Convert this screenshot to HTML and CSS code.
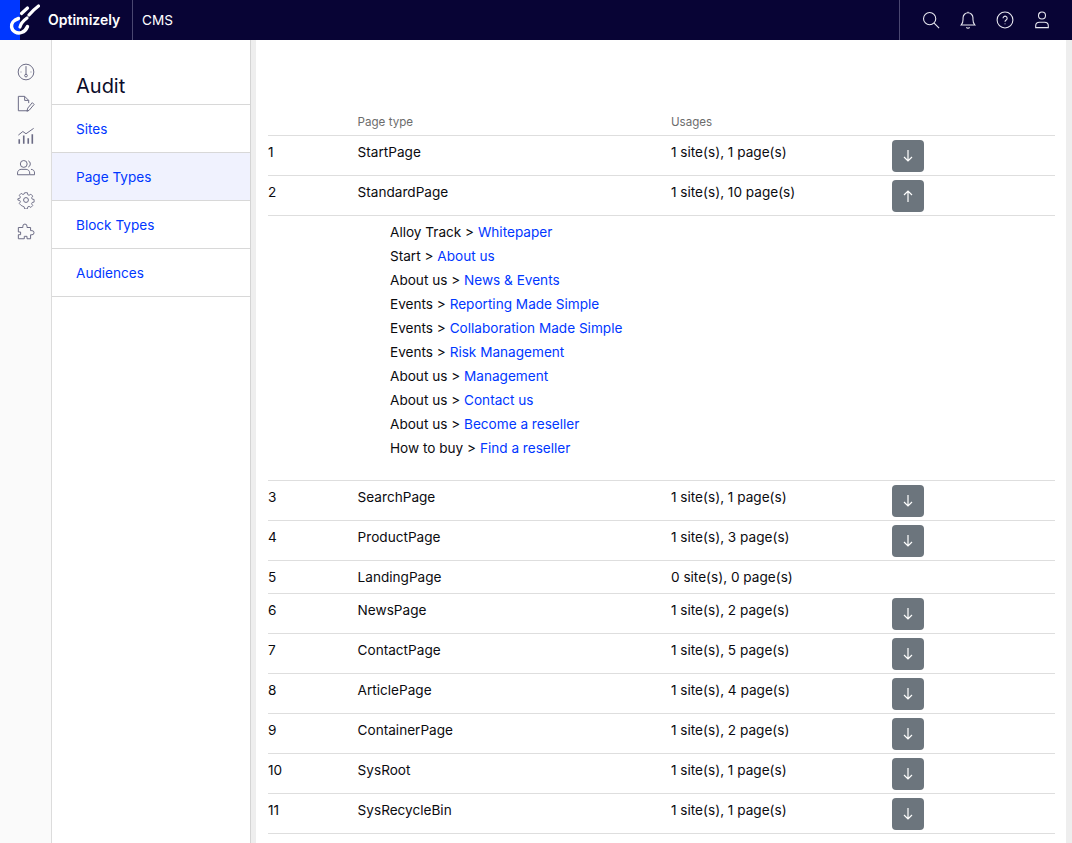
FILE: index.html
```html
<!DOCTYPE html>
<html lang="en">
<head>
<meta charset="utf-8">
<title>Audit</title>
<link rel="stylesheet" href="styles.css">
</head>
<body>
<header class="topbar">
  <a class="logo" href="#">
    <svg class="logo-mark" viewBox="0 0 40 40" width="40" height="40" aria-hidden="true">
      <g fill="none" stroke="#fff" stroke-linecap="round">
        <path d="M18.500 18.500C13.500 20 11 23.500 11.600 27C12.300 31.500 17 34 21.500 32.500C24.500 31.500 26.500 29 27.500 26.500" stroke-width="3.400"/>
        <path d="M20 27C20.800 23.500 23.500 20.500 27 18" stroke-width="3.200"/>
        <path d="M21.500 13.500L27.500 8" stroke-width="3.200" />
        <path d="M29 15C31.500 12 34.500 9 38.500 6" stroke-width="3.200" />
      </g>
    </svg>
    <span class="logo-text">Optimizely</span>
  </a>
  <div class="product">CMS</div>
  <div class="top-actions">
    <svg class="top-icon" viewBox="0 0 20 20" aria-hidden="true"><circle cx="8.500" cy="8.500" r="6.800"/><path d="M13.500 13.500L19 19"/></svg>
    <svg class="top-icon" viewBox="0 0 20 20" aria-hidden="true"><path d="M2.500 15.500C4 14 4.500 12.500 4.500 9.500V7.500a5.500 5.500 0 0 1 11 0v2c0 3 .5 4.500 2 6Z"/><path d="M10 2V.8M8.300 18a1.800 1.800 0 0 0 3.400 0"/></svg>
    <svg class="top-icon" viewBox="0 0 20 20" aria-hidden="true"><circle cx="10" cy="10" r="8.800"/><path d="M7.800 8a2.300 2.300 0 1 1 3.500 2c-.9.600-1.300 1-1.300 2"/><path d="M10 13.800v.9"/></svg>
    <svg class="top-icon" viewBox="0 0 20 20" aria-hidden="true"><circle cx="10" cy="5" r="3.900"/><path d="M3 18.500v-2c0-2.400 2-4 4.200-4h5.600c2.200 0 4.200 1.600 4.200 4v2Z"/></svg>
  </div>
</header>
<div class="shell">
  <nav class="rail">
    <svg class="rail-icon" viewBox="0 0 20 20" aria-hidden="true"><circle cx="10" cy="10" r="8.700"/><path d="M10 3.500v9"/><circle cx="10" cy="14" r="1.500"/><path d="M4 10h.9M15.100 10h.9"/></svg>
    <svg class="rail-icon" viewBox="0 0 20 20" aria-hidden="true"><path d="M12.500 17.500H1.500V1.500h7l4.500 4.500v3"/><path d="M8.500 1.500V6H13"/><path d="M11 18l1-3.500L17 8.500l2 2-5.500 6.500Z"/></svg>
    <svg class="rail-icon" viewBox="0 0 20 20" aria-hidden="true"><path d="M1.500 9l5-4 3.500 2.500L18.500 1.500"/><path d="M2.500 18.500v-5M7.500 18.500V9.500M12.500 18.500v-6M17 18.500V8" stroke-width="1.800"/></svg>
    <svg class="rail-icon" viewBox="0 0 20 20" aria-hidden="true"><circle cx="7.500" cy="5.500" r="3.800"/><path d="M.6 17.500v-2c0-2.500 2-4 4-4h5.500c2 0 4 1.500 4 4v2Z"/><path d="M12.500 2a3.800 3.800 0 0 1 0 7M15.500 11.500c2.300 0 4 1.500 4 4v2h-5"/></svg>
    <svg class="rail-icon" viewBox="0 0 20 20" aria-hidden="true"><circle cx="10" cy="10" r="2.700"/><path d="M8.300 1h3.400l.5 2.500 1.600.7 2.200-1.400 2.300 2.400-1.400 2.100.7 1.600 2.400.5v3.200l-2.400.5-.7 1.600 1.400 2.100-2.300 2.400-2.200-1.400-1.600.7-.5 2.500H8.300l-.5-2.500-1.600-.7L4 16.700l-2.300-2.400 1.400-2.100-.7-1.600-2.400-.5V8.400l2.400-.5.7-1.600-1.400-2.100L4 1.800l2.200 1.400 1.600-.7Z" transform="translate(1 1) scale(.9)"/></svg>
    <svg class="rail-icon" viewBox="0 0 20 20" aria-hidden="true"><path d="M6.500 5V3.500a2.300 2.300 0 0 1 4.600 0V5h4v3.500h1.500a2.300 2.300 0 0 1 0 4.600h-1.500v4.400h-4v-2.700h-3v2.700H1.500v-4.500h2.500v-3H1.500V5Z"/></svg>
  </nav>
  <aside class="menu">
    <h1 class="menu-title">Audit</h1>
    <ul class="menu-list">
      <li class="menu-item"><a href="#">Sites</a></li>
      <li class="menu-item is-active"><a href="#">Page Types</a></li>
      <li class="menu-item"><a href="#">Block Types</a></li>
      <li class="menu-item"><a href="#">Audiences</a></li>
    </ul>
  </aside>
  <main class="content">
    <table class="audit">
      <thead>
        <tr><th class="c-num"></th><th class="c-type">Page type</th><th class="c-use">Usages</th><th class="c-act"></th></tr>
      </thead>
      <tbody>
        <tr><td>1</td><td>StartPage</td><td>1 site(s), 1 page(s)</td><td class="act"><button class="toggle"><svg viewBox="0 0 12 14"><path d="M6 1v11M2 8l4 4 4-4"/></svg></button></td></tr>
        <tr><td>2</td><td>StandardPage</td><td>1 site(s), 10 page(s)</td><td class="act"><button class="toggle"><svg viewBox="0 0 12 14"><path d="M6 13V2M2 6l4-4 4 4"/></svg></button></td></tr>
        <tr class="detail-row"><td colspan="4">
          <ul class="usage">
            <li>Alloy Track &gt; <a href="#">Whitepaper</a></li>
            <li>Start &gt; <a href="#">About us</a></li>
            <li>About us &gt; <a href="#">News &amp; Events</a></li>
            <li>Events &gt; <a href="#">Reporting Made Simple</a></li>
            <li>Events &gt; <a href="#">Collaboration Made Simple</a></li>
            <li>Events &gt; <a href="#">Risk Management</a></li>
            <li>About us &gt; <a href="#">Management</a></li>
            <li>About us &gt; <a href="#">Contact us</a></li>
            <li>About us &gt; <a href="#">Become a reseller</a></li>
            <li>How to buy &gt; <a href="#">Find a reseller</a></li>
          </ul>
        </td></tr>
        <tr><td>3</td><td>SearchPage</td><td>1 site(s), 1 page(s)</td><td class="act"><button class="toggle"><svg viewBox="0 0 12 14"><path d="M6 1v11M2 8l4 4 4-4"/></svg></button></td></tr>
        <tr><td>4</td><td>ProductPage</td><td>1 site(s), 3 page(s)</td><td class="act"><button class="toggle"><svg viewBox="0 0 12 14"><path d="M6 1v11M2 8l4 4 4-4"/></svg></button></td></tr>
        <tr><td>5</td><td>LandingPage</td><td>0 site(s), 0 page(s)</td><td class="act"></td></tr>
        <tr><td>6</td><td>NewsPage</td><td>1 site(s), 2 page(s)</td><td class="act"><button class="toggle"><svg viewBox="0 0 12 14"><path d="M6 1v11M2 8l4 4 4-4"/></svg></button></td></tr>
        <tr><td>7</td><td>ContactPage</td><td>1 site(s), 5 page(s)</td><td class="act"><button class="toggle"><svg viewBox="0 0 12 14"><path d="M6 1v11M2 8l4 4 4-4"/></svg></button></td></tr>
        <tr><td>8</td><td>ArticlePage</td><td>1 site(s), 4 page(s)</td><td class="act"><button class="toggle"><svg viewBox="0 0 12 14"><path d="M6 1v11M2 8l4 4 4-4"/></svg></button></td></tr>
        <tr><td>9</td><td>ContainerPage</td><td>1 site(s), 2 page(s)</td><td class="act"><button class="toggle"><svg viewBox="0 0 12 14"><path d="M6 1v11M2 8l4 4 4-4"/></svg></button></td></tr>
        <tr><td>10</td><td>SysRoot</td><td>1 site(s), 1 page(s)</td><td class="act"><button class="toggle"><svg viewBox="0 0 12 14"><path d="M6 1v11M2 8l4 4 4-4"/></svg></button></td></tr>
        <tr><td>11</td><td>SysRecycleBin</td><td>1 site(s), 1 page(s)</td><td class="act"><button class="toggle"><svg viewBox="0 0 12 14"><path d="M6 1v11M2 8l4 4 4-4"/></svg></button></td></tr>
      </tbody>
    </table>
  </main>
  <div class="scrollbar"></div>
</div>
</body>
</html>
```
FILE: styles.css
```css
* { box-sizing: border-box; }
html, body { height: 100%; }
body {
  margin: 0;
  overflow: hidden;
  font-family: Inter, "Liberation Sans", sans-serif;
  font-size: 13.6px;
  line-height: 16px;
  color: #0b0b1a;
  background: #fff;
}
a { color: #0037ff; text-decoration: none; }

.topbar {
  display: flex;
  align-items: center;
  height: 40px;
  background: #080435;
  color: #fff;
}
.logo {
  display: flex;
  align-items: center;
  width: 133px;
  height: 40px;
  color: #fff;
  background: linear-gradient(90deg, #0037ff 20px, transparent 20px);
  border-right: 1px solid #4a4770;
}
.logo-mark { flex: none; display: block; }
.logo-text { margin-left: 8px; font-weight: 600; font-size: 14px; }
.product { margin-left: 9px; font-size: 13.6px; }
.top-actions {
  margin-left: auto;
  width: 173px;
  height: 40px;
  display: flex;
  align-items: center;
  gap: 19px;
  padding-left: 22px;
  border-left: 1px solid #4a4770;
}
.top-icon {
  width: 18px;
  height: 18px;
  fill: none;
  stroke: #e8e8f0;
  stroke-width: 1.200;
}

.shell { display: flex; height: 803px; }
.rail {
  width: 52px;
  flex: none;
  background: #fafafa;
  border-right: 1px solid #dcdcdc;
  display: flex;
  flex-direction: column;
  align-items: center;
  padding-top: 23px;
  gap: 14px;
}
.rail-icon {
  width: 18px;
  height: 18px;
  fill: none;
  stroke: #6b6b85;
  stroke-width: 1.100;
}
.menu {
  width: 204px;
  flex: none;
  background: #fff;
  border-right: 5px solid #eeeeee;
  box-shadow: inset -1px 0 0 #d4d4d4;
}
.menu-title {
  margin: 0 1px 0 0;
  padding: 34px 0 5px 24px;
  font-size: 20px;
  line-height: 25px;
  font-weight: 400;
  color: #0b0b2a;
  border-bottom: 1px solid #d8d8d8;
}
.menu-list { list-style: none; margin: 0 1px 0 0; padding: 0; }
.menu-item {
  height: 48px;
  border-bottom: 1px solid #d8d8d8;
  display: flex;
  align-items: center;
  padding-left: 24px;
}
.menu-item.is-active { background: #f0f2fe; }

.content { flex: 1; padding: 73px 11px 0 12px; min-width: 0; }
.audit { width: 787px; border-collapse: collapse; table-layout: fixed; }
.audit th {
  font-size: 11.6px;
  font-weight: 400;
  color: #6c6c6c;
  text-align: left;
  height: 22px;
  padding: 0 0 5px;
  line-height: 16px;
  vertical-align: bottom;
}
.c-num { width: 89.6px; }
.c-type { width: 313.4px; }
.c-use { width: 221px; }
.audit thead tr { border-bottom: 1px solid #dedede; }
.audit tbody tr { border-bottom: 1px solid #dedede; }
.audit td {
  padding: 8px 0;
  vertical-align: top;
  line-height: 16px;
  color: #0b0b0f;
}
.audit td.act { padding: 4px 0 3px; }
.toggle {
  display: flex;
  align-items: center;
  justify-content: center;
  width: 32px;
  height: 32px;
  padding: 0;
  border: 0;
  border-radius: 4px;
  background: #6c757d;
}
.toggle svg {
  width: 12px;
  height: 14px;
  fill: none;
  stroke: #fff;
  stroke-width: 1.200;
}
.audit td[colspan] { padding: 4px 0 20px 122px; }
.usage { list-style: none; margin: 0; padding: 0; }
.usage li { line-height: 24px; }
.scrollbar { width: 6px; flex: none; background: #eeeeee; }
```
